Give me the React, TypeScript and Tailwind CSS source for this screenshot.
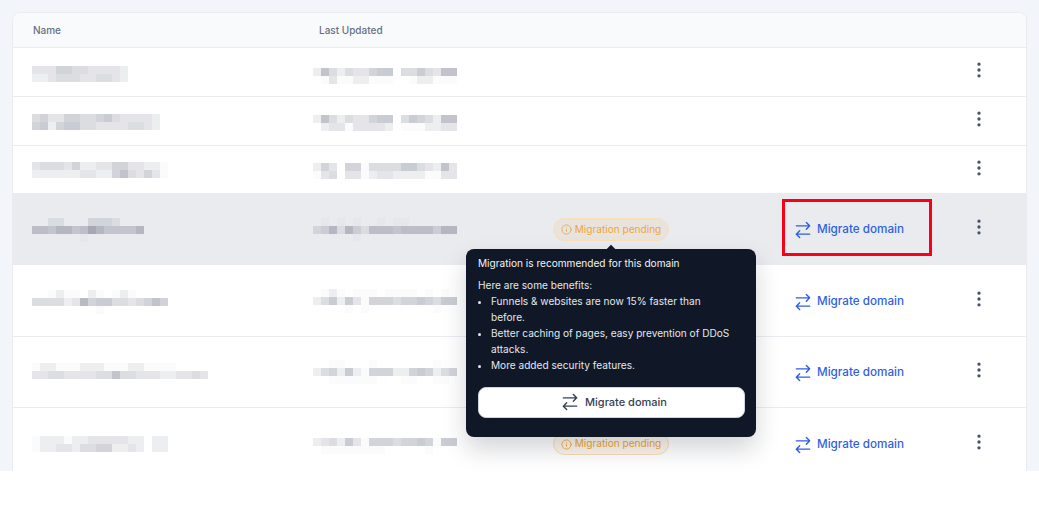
import { EllipsisVertical } from 'lucide-react'

// redacted cells: each digit is one 8px block, 0 = clear, 9 = darkest
function Mosaic({ rows, className }: { rows: string[]; className?: string }) {
  return (
    <div className={className}>
      {rows.map((row, i) => (
        <div key={i} className="flex h-2">
          {row.split('').map((d, j) => (
            <div key={j} className="h-2 w-2 shrink-0" style={{ backgroundColor: `rgba(95,100,120,${d === '1' ? 0.025 : Number(d) * 0.055})` }} />
          ))}
        </div>
      ))}
    </div>
  )
}

function SwitchIcon({ className }: { className?: string }) {
  return (
    <svg viewBox="0 0 24 24" fill="none" stroke="currentColor" strokeWidth="1.67" strokeLinecap="round" strokeLinejoin="round" className={className}>
      <path d="M20 17H4m0 0l4-4m-4 4l4 4M4 7h16m0 0l-4-4m4 4l-4 4" />
    </svg>
  )
}

function Badge() {
  return (
    <span className="flex h-[23px] w-[116px] items-center justify-center gap-[3px] rounded-full border border-[#f8dfb8] bg-[#f79009]/[0.08] pt-px text-[10.1px] text-[#eda63e]">
      <svg viewBox="0 0 24 24" fill="none" stroke="currentColor" strokeWidth="1.8" strokeLinecap="round" className="h-[11px] w-[11px]">
        <circle cx="12" cy="12" r="10" />
        <path d="M12 16v-4M12 8h.01" />
      </svg>
      Migration pending
    </span>
  )
}

function Tooltip() {
  return (
    <div className="absolute left-0 top-[56px] z-10 h-[188px] w-[290px] rounded-lg bg-[#101828] px-3 pt-[6px] text-[10.1px] leading-4 text-[#e4e7ec] shadow-[0_12px_24px_rgba(16,24,40,0.18)]">
      <div className="absolute -top-[3px] left-[142px] h-[6px] w-[6px] rotate-45 bg-[#101828]" />
      <p className="text-[#f2f4f7]">Migration is recommended for this domain</p>
      <p className="mt-[6px]">Here are some benefits:</p>
      <ul className="w-[257px] list-disc pl-[13px]">
        <li>Funnels &amp; websites are now 15% faster than before.</li>
        <li>Better caching of pages, easy prevention of DDoS attacks.</li>
        <li>More added security features.</li>
      </ul>
      <button className="mt-[14px] flex h-[31px] w-[267px] items-center justify-center gap-[5px] rounded-lg border border-[#d0d5dd] bg-white pb-[2px] pl-1 text-[11px] font-medium text-[#344054]">
        <SwitchIcon className="h-5 w-5" />
        Migrate domain
      </button>
    </div>
  )
}

// the tooltip covers the badges of the two rows below the active one
const rows = [
  {
    height: 'h-[49px] border-b border-[#eaecf0]',
    name: ['333554433332', '223444334432'],
    nameOffset: 'mt-[3px]',
    date: ['274243356604464377', '013112211100122111'],
    dateOffset: 'mt-[8px]',
  },
  {
    height: 'h-[49px] border-b border-[#eaecf0]',
    name: ['4533554456433332', '5625664433334432'],
    nameOffset: 'mt-[2px]',
    date: ['274243356604654277', '023313333201112233'],
    dateOffset: 'mt-[4px]',
  },
  {
    height: 'h-[47px]',
    name: ['34443522335533221', '22222233225743531'],
    nameOffset: 'mt-[1px]',
    date: ['253055144446643273', '134033123322221133'],
    dateOffset: 'mt-[3px]',
  },
  {
    height: 'h-[72px] bg-[#e9ebef]',
    name: ['00220003332000', '66577569755557', '00000010000000'],
    nameOffset: 'mt-[2px]',
    date: ['010101001011000000', '347274266656666477', '000001000000000000'],
    dateOffset: 'mt-[2px]',
    badge: true,
    migrate: true,
    active: true,
  },
  {
    height: 'h-[72px] border-b border-[#eaecf0]',
    migrate: true,
    name: ['00121102101210000', '44442385664434575', '00000000100000000'],
    nameOffset: 'mt-[3px]',
    date: ['012101110111101010', '246263155545565466', '000010100000000100'],
    dateOffset: 'mt-[1px]',
  },
  {
    height: 'h-[71px] border-b border-[#eaecf0]',
    migrate: true,
    name: ['1221112221112211110000', '3344333344744333223343'],
    nameOffset: '-mt-[2px]',
    date: ['001100010000000100', '245262155522565245', '001111110001100110'],
    dateOffset: '',
  },
  {
    height: 'h-[71px]',
    badge: true,
    migrate: true,
    name: ['12221223333322022', '12233244552232022'],
    nameOffset: '',
    date: ['234263155545565166', '011111111000001000'],
    dateOffset: 'mt-[5px]',
  },
]

export default function App() {
  return (
    <div className="h-[507px] w-[1039px] overflow-hidden bg-white font-['Inter',sans-serif]">
      <div className="h-[471px] overflow-hidden bg-[#f2f5f9] px-3 pt-3">
        <div className="w-[1015px] rounded-t-lg border border-[#eaecf0] bg-white">
          <div className="flex h-[35px] items-center rounded-t-lg border-b border-[#eaecf0] bg-[#f9fafb] text-[10px] font-medium text-[#667085]">
            <div className="w-[306px] pl-5">Name</div>
            <div>Last Updated</div>
          </div>

          {rows.map((row, i) => (
            <div key={i} className={`flex items-center ${row.height}`}>
              <div className="w-[300px] pl-[19px]">
                <Mosaic rows={row.name} className={row.nameOffset} />
              </div>
              <div className="w-[153px]">
                <Mosaic rows={row.date} className={row.dateOffset} />
              </div>
              <div className="relative flex h-full w-[290px] items-center justify-center">
                {row.badge && <Badge />}
                {row.active && <Tooltip />}
              </div>
              <div className="relative flex h-full w-[213px] items-center pl-10">
                {row.migrate && (
                  <div className="mt-[2px] flex items-center text-[11.7px] font-medium text-[#2f5fe0]">
                    <SwitchIcon className="h-5 w-5 -ml-[3px] mr-[4px]" />
                    Migrate domain
                  </div>
                )}
                {row.active && <div className="absolute left-[26px] top-[6px] h-[57px] w-[150px] border-[3px] border-[#f8001a]" />}
              </div>
              <EllipsisVertical className="-mt-1 h-5 w-5 text-[#475467]" />
            </div>
          ))}
        </div>
      </div>
    </div>
  )
}
